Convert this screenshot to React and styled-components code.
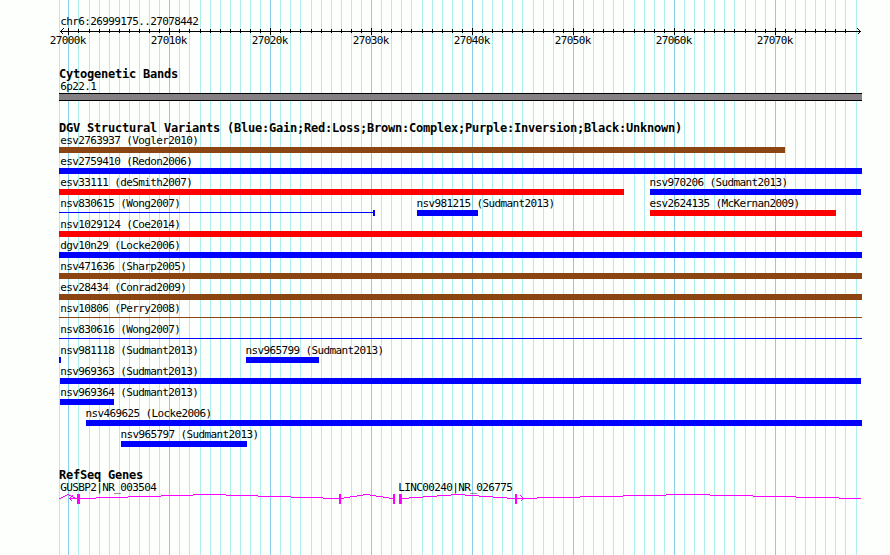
import styled, { createGlobalStyle } from 'styled-components';

const GlobalStyle = createGlobalStyle`
  html, body {
    margin: 0;
    background: #fcfffc;
  }
`;

const ORIGIN = 59;
const KB = 10.092;
const START = 68.85;
const tickX = (kb) => Math.max(ORIGIN, Math.floor(START + kb * KB));
const ticks = Array.from({ length: 80 }, (_, i) => i - 1);

const Browser = styled.div`
  position: relative;
  box-sizing: border-box;
  width: 890px;
  height: 555px;
  padding: 16px 28px 0 ${ORIGIN}px;
  overflow: hidden;
  background: #fcfffc;
  color: #000;
  font-family: 'DejaVu Sans Mono', 'Liberation Mono', monospace;
`;

const GridLines = styled.svg`
  position: absolute;
  top: 0;
  left: 0;
`;

const Content = styled.div`
  position: relative;
`;

const Label = styled.div`
  height: 12px;
  font-size: 11px;
  line-height: 12px;
  letter-spacing: -0.622px;
  text-indent: 1.3px;
  white-space: pre;
`;

const Title = styled.h2`
  height: 13px;
  margin: 0;
  font-size: 12px;
  font-weight: bold;
  line-height: 13px;
  letter-spacing: -0.225px;
  white-space: pre;
`;

const Axis = styled.svg`
  display: block;
  margin-left: -${ORIGIN}px;
`;

const Scale = styled.div`
  display: flex;
  height: 14px;
  margin: -1px 0 0 -10.5px;
`;

const ScaleLabel = styled(Label)`
  width: 101px;
  flex: none;
`;

const Track = styled.section`
  margin-top: ${(p) => p.$gap}px;
`;

const Band = styled.div`
  box-sizing: border-box;
  width: 803px;
  height: 8px;
  border: 1px solid #000;
  border-width: 1px 0;
  background: #848084;
`;

const Lane = styled.div`
  display: grid;
  grid-template-columns: 100%;
  height: 21px;
`;

const Feature = styled.div`
  grid-area: 1 / 1;
  margin-left: ${(p) => p.$x - ORIGIN}px;
`;

const FeatureLabel = styled(Label)`
  text-indent: ${(p) => Math.max(-0.4, 60.3 - p.$x)}px;
`;

const Bar = styled.div`
  width: ${(p) => p.$width}px;
  height: ${(p) => (p.$thin ? 1 : 6)}px;
  margin-top: ${(p) => (p.$thin ? 2 : 0)}px;
  background: ${(p) => p.$color};
`;

const EndBar = styled(Bar)`
  display: flex;
  align-items: flex-start;
  justify-content: flex-end;

  &::after {
    content: '';
    width: 2px;
    height: 6px;
    margin-top: -2px;
    flex: none;
    background: ${(p) => p.$color};
  }
`;

const GeneNames = styled.div`
  display: grid;
  grid-template-columns: 338px auto;
  height: 11px;
`;

const GAIN = '#0000ff';
const LOSS = '#ff0000';
const COMPLEX = '#8b4513';

// x and end are pixel columns, end is exclusive
const lanes = [
  [{ name: 'esv2763937 (Vogler2010)', x: 59, end: 785, color: COMPLEX }],
  [{ name: 'esv2759410 (Redon2006)', x: 59, end: 862, color: GAIN }],
  [
    { name: 'esv33111 (deSmith2007)', x: 59, end: 624, color: LOSS },
    { name: 'nsv970206 (Sudmant2013)', x: 650, end: 861, color: GAIN },
  ],
  [
    { name: 'nsv830615 (Wong2007)', x: 59, end: 375, color: GAIN, thin: true, capped: true },
    { name: 'nsv981215 (Sudmant2013)', x: 417, end: 478, color: GAIN },
    { name: 'esv2624135 (McKernan2009)', x: 650, end: 836, color: LOSS },
  ],
  [{ name: 'nsv1029124 (Coe2014)', x: 59, end: 862, color: LOSS }],
  [{ name: 'dgv10n29 (Locke2006)', x: 59, end: 862, color: GAIN }],
  [{ name: 'nsv471636 (Sharp2005)', x: 59, end: 862, color: COMPLEX }],
  [{ name: 'esv28434 (Conrad2009)', x: 59, end: 862, color: COMPLEX }],
  [{ name: 'nsv10806 (Perry2008)', x: 59, end: 862, color: COMPLEX, thin: true }],
  [{ name: 'nsv830616 (Wong2007)', x: 59, end: 862, color: GAIN, thin: true }],
  [
    { name: 'nsv981118 (Sudmant2013)', x: 59, end: 61, color: GAIN },
    { name: 'nsv965799 (Sudmant2013)', x: 246, end: 319, color: GAIN },
  ],
  [{ name: 'nsv969363 (Sudmant2013)', x: 60, end: 861, color: GAIN }],
  [{ name: 'nsv969364 (Sudmant2013)', x: 60, end: 114, color: GAIN }],
  [{ name: 'nsv469625 (Locke2006)', x: 86, end: 862, color: GAIN }],
  [{ name: 'nsv965797 (Sudmant2013)', x: 121, end: 247, color: GAIN }],
];

const Ruler = () => (
  <Axis width="890" height="8" shapeRendering="crispEdges">
    <rect x="60" y="3" width="801" height="1" />
    {ticks.filter((kb) => kb >= 0 && kb < 78).map((kb) => (
      <rect
        key={kb}
        x={tickX(kb)}
        y={kb % 10 === 0 ? 0 : 1}
        width="1"
        height={kb % 10 === 0 ? 7 : 4}
      />
    ))}
    <path d="M63.5 .5L60.5 3.5L63.5 6.5M857.5 .5L860.5 3.5L857.5 6.5" fill="none" stroke="#000" />
  </Axis>
);

const Genes = () => (
  <Axis width="890" height="12" shapeRendering="crispEdges">
    <g fill="none" stroke="#ff00ff">
      <path d="M59 5.5H61M61 4.5H63M63 3.5H65M65 2.5H67M67 1.5H69M69 2.5H71M71 3.5H73M73 4.5H75" />
      <path d="M69 5.5H96M96 4.5H128M128 3.5H161M161 2.5H193M193 1.5H226M226 2.5H258M258 3.5H291M291 4.5H323M323 5.5H344" />
      <path d="M344 4.5H350M350 3.5H357M357 2.5H363M363 1.5H370M370 2.5H376M376 3.5H383M383 4.5H389M389 5.5H394" />
      <path d="M402 5.5H409M409 4.5H423M423 3.5H437M437 2.5H451M451 1.5H465M465 2.5H479M479 3.5H493M493 4.5H507M507 5.5H537" />
      <path d="M537 4.5H580M580 3.5H623M623 2.5H666M666 1.5H710M710 2.5H753M753 3.5H796M796 4.5H839M839 5.5H861" />
      <path d="M72.5 2.5L69.5 5.5L72.5 8.5M520.5 2.5L523.5 5.5L520.5 8.5" />
    </g>
    <g fill="#ff00ff">
      <rect x="77" y="1" width="3" height="10" />
      <rect x="339" y="1" width="2" height="10" />
      <rect x="393" y="1" width="2" height="10" />
      <rect x="399" y="1" width="3" height="10" />
      <rect x="515" y="1" width="2" height="10" />
    </g>
  </Axis>
);

const App = () => (
  <>
    <GlobalStyle />
    <Browser>
      <GridLines width="890" height="555" shapeRendering="crispEdges">
        {ticks.map((kb) => (
          <rect
            key={kb}
            x={tickX(kb)}
            y="0"
            width={kb < 79 ? 1 : 0}
            height="555"
            fill={kb % 10 === 0 ? '#87ceeb' : '#afeeee'}
          />
        ))}
      </GridLines>
      <Content>
        <Label>chr6:26999175..27078442</Label>
        <Ruler />
        <Scale>
          {[0, 1, 2, 3, 4, 5, 6, 7].map((n) => (
            <ScaleLabel key={n}>{`270${n}0k`}</ScaleLabel>
          ))}
        </Scale>
        <Track $gap={19}>
          <Title>Cytogenetic Bands</Title>
          <FeatureLabel $x={59}>6p22.1</FeatureLabel>
          <Band />
        </Track>
        <Track $gap={21}>
          <Title>DGV Structural Variants (Blue:Gain;Red:Loss;Brown:Complex;Purple:Inversion;Black:Unknown)</Title>
          {lanes.map((lane) => (
            <Lane key={lane[0].name}>
              {lane.map((f) => {
                const Shape = f.capped ? EndBar : Bar;
                return (
                  <Feature key={f.name} $x={f.x}>
                    <FeatureLabel $x={f.x}>{f.name}</FeatureLabel>
                    <Shape $width={f.end - f.x} $thin={f.thin} $color={f.color} />
                  </Feature>
                );
              })}
            </Lane>
          ))}
        </Track>
        <Track $gap={19}>
          <Title>RefSeq Genes</Title>
          <GeneNames>
            <Label>GUSBP2|NR_003504</Label>
            <Label>LINC00240|NR_026775</Label>
          </GeneNames>
          <Genes />
        </Track>
      </Content>
    </Browser>
  </>
);

export default App;
